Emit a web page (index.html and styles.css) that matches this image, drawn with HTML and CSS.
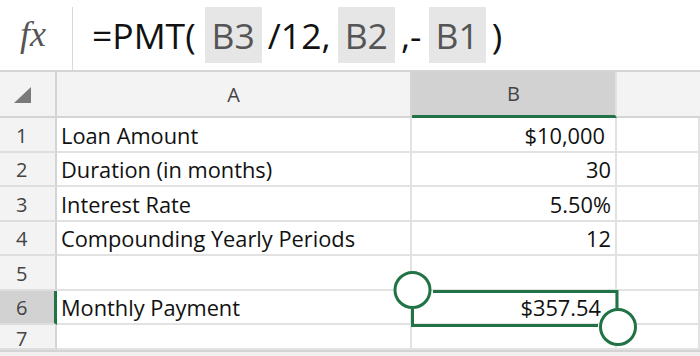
FILE: index.html
```html
<!DOCTYPE html>
<html lang="en">
<head>
<meta charset="UTF-8">
<title>PMT - Monthly Payment</title>
<link rel="stylesheet" href="styles.css">
</head>
<body>
<div class="formula-bar">
  <div class="fx">fx</div>
  <div class="formula">
    <span class="fpart first">=PMT(</span>
    <span class="ref">B3</span>
    <span class="fpart">/12,</span>
    <span class="ref">B2</span>
    <span class="fpart">,-</span>
    <span class="ref">B1</span>
    <span class="fpart">)</span>
  </div>
</div>

<div class="sheet">
  <div class="corner">
    <svg width="18" height="17" viewBox="0 0 18 17"><polygon points="17,0 17,16 0,16" fill="#7a7a7a"/></svg>
  </div>
  <div class="col-head">A</div>
  <div class="col-head active">B</div>
  <div class="col-head empty"></div>

  <div class="row-head">1</div>
  <div class="cell">Loan Amount</div>
  <div class="cell num money">$10,000</div>
  <div class="cell"></div>

  <div class="row-head">2</div>
  <div class="cell">Duration (in months)</div>
  <div class="cell num">30</div>
  <div class="cell"></div>

  <div class="row-head">3</div>
  <div class="cell">Interest Rate</div>
  <div class="cell num">5.50%</div>
  <div class="cell"></div>

  <div class="row-head">4</div>
  <div class="cell">Compounding Yearly Periods</div>
  <div class="cell num">12</div>
  <div class="cell"></div>

  <div class="row-head">5</div>
  <div class="cell"></div>
  <div class="cell"></div>
  <div class="cell"></div>

  <div class="row-head active">6</div>
  <div class="cell">Monthly Payment</div>
  <div class="cell num money2">$357.54</div>
  <div class="cell"></div>

  <div class="row-head last">7</div>
  <div class="cell last"></div>
  <div class="cell last"></div>
  <div class="cell last"></div>
</div>
<div class="tabs"></div>

<!-- selection handles drawn over the grid -->
<svg class="selection" width="700" height="356" viewBox="0 0 700 356">
  <path d="M433 291.5 H617 V308 M598 325.5 H412.5 V309" fill="none" stroke="#217346" stroke-width="3"/>
  <circle cx="412.5" cy="290" r="17.5" fill="#fff" stroke="#217346" stroke-width="3"/>
  <circle cx="618" cy="327" r="17.5" fill="#fff" stroke="#217346" stroke-width="3"/>
</svg>
</body>
</html>
```

FILE: styles.css
```css
body {
  margin: 0;
  width: 700px;
  height: 356px;
  overflow: hidden;
  background: #fff;
  font-family: "Open Sans", "Noto Sans", sans-serif;
  position: relative;
}
.formula-bar {
  display: flex;
  height: 70px;
  border-bottom: 2px solid #d4d4d4;
}
.fx {
  width: 73px;
  margin-top: 7px;
  border-right: 1px solid #d9d9d9;
  font-family: "Liberation Serif", "DejaVu Serif", serif;
  font-style: italic;
  font-size: 36px;
  color: #555;
  text-align: center;
  line-height: 54px;
  padding-right: 6px;
  box-sizing: border-box;
}
.formula {
  display: flex;
  align-items: center;
  font-size: 35.5px;
  color: #111;
}
.fpart {
  margin: 0 7px 0 6px;
}
.fpart.first {
  margin-left: 19px;
  margin-right: 9px;
}
.ref {
  background: #e6e6e6;
  color: #555;
  height: 56px;
  line-height: 56px;
  padding: 0 7px;
}
.sheet {
  display: grid;
  grid-template-columns: 57px 355px 205px 1fr;
  grid-template-rows: 46px repeat(6, 34.5px) 25px;
}
.sheet > div {
  box-sizing: border-box;
  border-right: 2px solid #e2e2e2;
  border-bottom: 2px solid #e2e2e2;
}
.corner, .col-head, .row-head {
  background: #f3f3f3;
  color: #444;
  font-size: 20px;
}
.sheet > .corner, .sheet > .col-head {
  border-bottom: 2px solid #d4d4d4;
  border-right: 2px solid #d4d4d4;
}
.corner {
  display: flex;
  align-items: flex-end;
  padding: 0 0 12px 14px;
}
.col-head {
  display: flex;
  align-items: center;
  justify-content: center;
}
.sheet > .col-head.active {
  background: #d2d2d2;
  border-bottom: 3px solid #217346;
  border-right-color: #e2e2e2;
}
.sheet > .col-head.empty {
  border-right: none;
}
.sheet > .row-head {
  border-right: 2px solid #d4d4d4;
  border-bottom: 2px solid #dedede;
  display: flex;
  align-items: center;
  padding: 2px 0 0 16px;
}
.sheet > .row-head.active {
  background: #d2d2d2;
  border-right: 3px solid #217346;
}
.sheet > .row-head.last, .cell.last {
  align-items: flex-start;
  padding-top: 0;
}
.cell {
  display: flex;
  align-items: center;
  padding: 2px 4px 0;
  font-size: 21.8px;
  color: #111;
  white-space: nowrap;
}
.cell.num {
  justify-content: flex-end;
}
.cell.money {
  padding-right: 10px;
}
.cell.money2 {
  padding-right: 14px;
}
.tabs {
  height: 7px;
  border-top: 2px solid #d4d4d4;
  background: #f0f0f0;
}
.selection {
  position: absolute;
  top: 0;
  left: 0;
  pointer-events: none;
}
```
